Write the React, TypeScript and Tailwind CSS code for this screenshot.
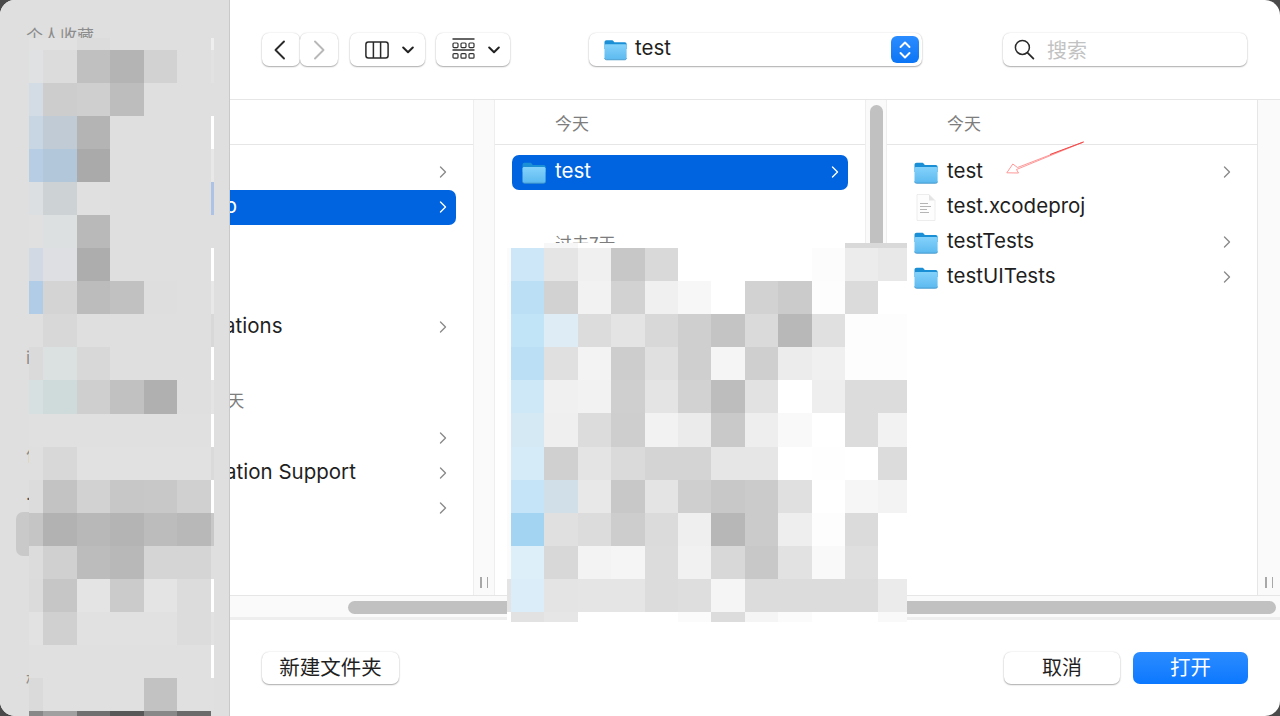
import React from "react";

const sideRows: string[][] = [
  ["#e1e1e1","#e1e1e1","#dcdcdc","#dfdfdf","#dfdfdf","#dfdfdf","#eeeeee"],
  ["#e0e1e3","#dcdcdc","#c0c0c0","#b4b4b4","#d2d2d2","#dfdfdf","#e2e2e2"],
  ["#d3dbe5","#cdcdcd","#cfcfcf","#bdbdbd","#dfdfdf","#dfdfdf","#dfdfdf"],
  ["#c8d5e2","#c1cbd5","#b4b4b4","#dfdfdf","#dfdfdf","#dfdfdf","#ffffff"],
  ["#b6cde3","#b3c7da","#aaaaaa","#dfdfdf","#dfdfdf","#dfdfdf","#e8e8e8"],
  ["#dbdfe2","#cdd2d5","#e0e0e0","#dfdfdf","#dfdfdf","#dfdfdf","#adc3e6"],
  ["#e0e0e0","#dde0e0","#b9b9b9","#dfdfdf","#dfdfdf","#dfdfdf","#dfdfdf"],
  ["#d1d9e4","#dddfe2","#adadad","#dfdfdf","#dfdfdf","#dfdfdf","#ffffff"],
  ["#b0cce6","#d4d4d4","#bcbcbc","#c1c1c1","#dedede","#dfdfdf","#e8e8e8"],
  ["#dfdfdf","#d8d8d8","#dfdfdf","#dfdfdf","#dfdfdf","#dfdfdf","#d8d8d8"],
  ["#dadada","#dbe0e0","#d8d8d8","#dfdfdf","#dfdfdf","#dfdfdf","#ffffff"],
  ["#d7e0e0","#cfdbdb","#cfcfcf","#c1c1c1","#b0b0b0","#dfdfdf","#e4e4e4"],
  ["#e0e0e0","#e0e0e0","#e0e0e0","#e0e0e0","#e0e0e0","#e0e0e0","#ffffff"],
  ["#dfdfdf","#d8d8d8","#e1e1e1","#e1e1e1","#e1e1e1","#e1e1e1","#dadada"],
  ["#dcdcdc","#c3c3c3","#d2d2d2","#c7c7c7","#c8c8c8","#d0d0d0","#ffffff"],
  ["#c5c5c5","#b2b2b2","#b8b8b8","#b4b4b4","#bcbcbc","#b8b8b8","#c8c8c8"],
  ["#dcdcdc","#d0d0d0","#bcbcbc","#b8b8b8","#d5d5d5","#d5d5d5","#dfdfdf"],
  ["#dbdbdb","#c6c6c6","#e4e4e4","#cbcbcb","#e4e4e4","#dcdcdc","#ffffff"],
  ["#e2e2e2","#d0d0d0","#e1e1e1","#e1e1e1","#e1e1e1","#dcdcdc","#e2e2e2"],
  ["#e0e0e0","#e0e0e0","#e0e0e0","#e0e0e0","#e0e0e0","#e0e0e0","#ffffff"],
  ["#dadada","#e0e0e0","#e0e0e0","#e0e0e0","#c2c2c2","#e0e0e0","#e0e0e0"],
  ["#888888","#a0a0a0","#707070","#585858","#888888","#6a6a6a","#dfdfdf"],
];

const midRows: string[][] = [
  ["#ffffff","#ffffff","#f7f7f7","#ffffff","#ffffff","#ffffff","#ffffff","#ffffff","#ffffff","#ffffff","#ffffff","#d9d9d9","#d9d9d9"],
  ["#fbfbfb","#cde7f8","#e5e5e5","#f0f0f0","#c7c7c7","#d9d9d9","#ffffff","#ffffff","#ffffff","#ffffff","#fcfcfc","#ececec","#e8e8e8"],
  ["#fbfbfb","#bbe0f6","#d2d2d2","#f2f2f2","#d2d2d2","#f0f0f0","#f7f7f7","#ffffff","#d2d2d2","#cbcbcb","#fdfdfd","#dbdbdb","#ffffff"],
  ["#fbfbfb","#c2e4f7","#deedf5","#dcdcdc","#e4e4e4","#d8d8d8","#cfcfcf","#c4c4c4","#dadada","#b8b8b8","#e0e0e0","#fdfdfd","#fdfdfd"],
  ["#fbfbfb","#bbe0f5","#e0e0e0","#f3f3f3","#cdcdcd","#e0e0e0","#cfcfcf","#f5f5f5","#cfcfcf","#ececec","#f0f0f0","#fdfdfd","#fdfdfd"],
  ["#fbfbfb","#cfe8f7","#f0f0f0","#f2f2f2","#cfcfcf","#e4e4e4","#d2d2d2","#bdbdbd","#e2e2e2","#ffffff","#eeeeee","#dcdcdc","#dcdcdc"],
  ["#fbfbfb","#d5e9f5","#efefef","#dcdcdc","#cecece","#f2f2f2","#ebebeb","#c9c9c9","#eeeeee","#f9f9f9","#ffffff","#dcdcdc","#f2f2f2"],
  ["#fbfbfb","#d5ebf7","#d0d0d0","#e4e4e4","#dadada","#d4d4d4","#d4d4d4","#e6e6e6","#e6e6e6","#ffffff","#fefefe","#ffffff","#dcdcdc"],
  ["#fbfbfb","#c5e4f7","#d0dfe8","#e8e8e8","#c8c8c8","#e4e4e4","#cfcfcf","#c8c8c8","#cbcbcb","#e0e0e0","#ffffff","#f6f6f6","#f3f3f3"],
  ["#fbfbfb","#a3d5f2","#e0e0e0","#dcdcdc","#cdcdcd","#dbdbdb","#efefef","#b7b7b7","#cbcbcb","#eeeeee","#fdfdfd","#dbdbdb","#ffffff"],
  ["#fbfbfb","#ddeff9","#d8d8d8","#f3f3f3","#f5f5f5","#dcdcdc","#f1f1f1","#d8d8d8","#c8c8c8","#e2e2e2","#f9f9f9","#dfdfdf","#ffffff"],
  ["#e4e4e4","#daedf8","#e4e4e4","#e5e5e5","#e5e5e5","#dcdcdc","#dedede","#f5f5f5","#dcdcdc","#dcdcdc","#dcdcdc","#dcdcdc","#ebebeb"],
  ["#ffffff","#e2e2e2","#e6e6e6","#ffffff","#ffffff","#ffffff","#fbfbfb","#dcdcdc","#f5f5f5","#fbfbfb","#ffffff","#ffffff","#f9f9f9"],
];

function Folder({ w = 24, h = 22 }: { w?: number; h?: number }) {
  return (
    <svg width={w} height={h} viewBox="0 0 24 22" className="shrink-0">
      <defs>
        <linearGradient id="fold" x1="0" y1="0" x2="0" y2="1">
          <stop offset="0" stopColor="#84d2fb" />
          <stop offset="1" stopColor="#5cb9ef" />
        </linearGradient>
      </defs>
      <path d="M0.5 3C0.5 1.6 1.4 0.8 2.6 0.8H8C9 0.8 9.4 1.2 10 1.9L10.8 3H21.6C23 3 23.6 3.8 23.6 5V10H0.5Z" fill="#1b8fd6" />
      <path d="M0.5 6.6C0.5 5.6 1.2 5 2.2 5H21.8C22.8 5 23.6 5.6 23.6 6.6V19.2C23.6 20.4 22.8 21.2 21.6 21.2H2.6C1.4 21.2 0.5 20.4 0.5 19.2Z" fill="url(#fold)" />
      <path d="M0.5 19.6C0.7 20.6 1.5 21.2 2.6 21.2H21.6C22.7 21.2 23.4 20.6 23.6 19.6" fill="none" stroke="#3d94c8" strokeWidth="0.9" />
    </svg>
  );
}

function Chevron({ white }: { white?: boolean }) {
  return (
    <svg width="8" height="12" viewBox="0 0 8 12" className="mb-[1px] shrink-0">
      <path d="M1.5 1L6.5 6L1.5 11" fill="none" stroke={white ? "#ffffff" : "#8a8a8a"} strokeWidth="1.4" strokeLinecap="round" strokeLinejoin="round" />
    </svg>
  );
}

function Down() {
  return (
    <svg width="12" height="8" viewBox="0 0 12 8">
      <path d="M1.2 1.5L6 6.2L10.8 1.5" fill="none" stroke="#222222" strokeWidth="2" strokeLinecap="round" strokeLinejoin="round" />
    </svg>
  );
}

function DocIcon() {
  return (
    <svg width="24" height="27" viewBox="0 0 24 27" className="shrink-0">
      <path d="M3 0.5H15L21 6.5V26.5H3Z" fill="#fdfdfd" stroke="#e8e8e8" strokeWidth="0.8" />
      <path d="M15 0.5V6.5H21Z" fill="#e4e4e4" />
      <path d="M6 9.5H14M6 12.5H17M6 15.5H13M6 18.5H15" stroke="#b5b5b5" strokeWidth="1" />
    </svg>
  );
}

function Grip() {
  return (
    <div className="mt-auto mb-[7px] flex justify-center gap-[5px]">
      <div className="h-[11px] w-[1.5px] bg-[#a8a8a8]" />
      <div className="h-[11px] w-[1.5px] bg-[#a8a8a8]" />
    </div>
  );
}

function Row({ name, sel, chev, doc, cls }: { name: string; sel?: boolean; chev?: boolean; doc?: boolean; cls?: string }) {
  return (
    <div className={`flex h-[35px] items-center rounded-[7px] pl-[10px] pr-[9px] ${sel ? "bg-[#0064e1] text-white" : "text-[#1f1f1f]"} ${cls ?? ""}`}>
      {doc ? <div className="w-[24px] shrink-0"><DocIcon /></div> : <Folder />}
      <span className="ml-[9px] whitespace-nowrap pb-[2px] text-[20.5px] leading-none">{name}</span>
      {chev && <div className="ml-auto flex"><Chevron white={sel} /></div>}
    </div>
  );
}

const btn = "flex items-center justify-center rounded-[7px] bg-white shadow-[0_1px_1.5px_rgba(0,0,0,0.3),0_0_1.5px_rgba(0,0,0,0.18)]";

export default function App() {
  return (
    <div className="relative h-[716px] w-[1280px] overflow-hidden bg-[#4a4a4a] font-['Inter','Noto_Sans_CJK_SC',sans-serif]">
      <div className="flex h-[716px] w-[1280px] overflow-hidden rounded-[15px] bg-white">
        {/* sidebar */}
        <aside className="relative z-10 flex h-full w-[230px] shrink-0 flex-col border-r border-[#c9c9c9] bg-[#dfdfdf] pl-[26px] pt-[26px] text-[17px] leading-[20px] text-[#8c8c8c]">
          <div>个人收藏</div>
          <div className="mt-[302px]">iCloud</div>
          <div className="mt-[77px]">位置</div>
          <div className="mt-[19px] text-[#555]">.</div>
          <div className="mt-[166px]">标签</div>
          <div className="absolute left-[16px] top-[512px] h-[44px] w-[40px] rounded-[7px] bg-[#c9c9c9]" />
          <div className="absolute left-[29px] top-[38px] grid grid-cols-[14px_repeat(5,33.5px)_3.5px] grid-rows-[12px_repeat(20,33.05px)_5px]">
            {sideRows.flat().map((c, i) => (
              <div key={i} style={{ backgroundColor: c }} />
            ))}
          </div>
        </aside>

        {/* main */}
        <main className="flex min-w-0 flex-1 flex-col">
          {/* toolbar */}
          <div className="flex h-[100px] shrink-0 items-start border-b border-[#e6e6e6] pl-[32px] pt-[33px]">
            <div className={`${btn} h-[33px] w-[38px] pr-[2px]`}>
              <svg width="14" height="20" viewBox="0 0 14 20"><path d="M11 1.5L2.5 10L11 18.5" fill="none" stroke="#2a2a2a" strokeWidth="1.9" strokeLinecap="round" strokeLinejoin="round" /></svg>
            </div>
            <div className={`${btn} h-[33px] w-[38px]`}>
              <svg width="14" height="20" viewBox="0 0 14 20"><path d="M3 1.5L11.5 10L3 18.5" fill="none" stroke="#b8b8b8" strokeWidth="1.9" strokeLinecap="round" strokeLinejoin="round" /></svg>
            </div>
            <div className={`${btn} ml-[12px] h-[33px] w-[75px] gap-[13px] pl-[4px]`}>
              <svg width="24" height="18" viewBox="0 0 24 18"><rect x="0.9" y="0.9" width="22.2" height="16.2" rx="2.5" fill="none" stroke="#2a2a2a" strokeWidth="1.5" /><path d="M8.4 1V17M15.6 1V17" stroke="#2a2a2a" strokeWidth="1.5" /></svg>
              <Down />
            </div>
            <div className={`${btn} ml-[11px] h-[33px] w-[74px] gap-[13px] pl-[5px]`}>
              <svg width="23" height="22" viewBox="0 0 23 22" className="-mt-[1px]">
                <path d="M0.5 1H22.5M0.5 12H22.5" stroke="#333333" strokeWidth="1.3" />
                {[1, 9, 17].map((x) => (
                  <g key={x}>
                    <rect x={x} y="5" width="5" height="4.6" rx="1" fill="none" stroke="#333333" strokeWidth="1.2" />
                    <rect x={x} y="15.6" width="5" height="4.6" rx="1" fill="none" stroke="#333333" strokeWidth="1.2" />
                  </g>
                ))}
              </svg>
              <Down />
            </div>
            <div className={`${btn} ml-[79px] h-[33px] w-[333px] justify-start pl-[15px] pr-[3px]`}>
              <Folder w={23} h={22} />
              <span className="ml-[8px] pb-[2px] text-[20.5px] leading-none text-[#1f1f1f]">test</span>
              <div className="ml-auto flex h-[27px] w-[28px] items-center justify-center rounded-[6px] bg-gradient-to-b from-[#2a8cff] to-[#0a75f5]">
                <svg width="14" height="22" viewBox="0 0 14 22"><path d="M2.5 8L7 3.5L11.5 8M2.5 14L7 18.5L11.5 14" fill="none" stroke="#ffffff" strokeWidth="1.9" strokeLinecap="round" strokeLinejoin="round" /></svg>
              </div>
            </div>
            <div className={`${btn} ml-[81px] h-[33px] w-[244px] justify-start pl-[11px]`}>
              <svg width="21" height="21" viewBox="0 0 21 21"><circle cx="8.4" cy="8.4" r="7" fill="none" stroke="#2a2a2a" strokeWidth="1.5" /><path d="M13.4 13.6L19.4 19.6" stroke="#2a2a2a" strokeWidth="1.8" strokeLinecap="round" /></svg>
              <span className="ml-[12px] pt-[2px] text-[20px] leading-none text-[#c2c2c2]">搜索</span>
            </div>
          </div>

          {/* columns */}
          <div className="flex h-[495px] shrink-0">
            <section className="-ml-[130px] flex w-[373px] shrink-0 flex-col">
              <div className="h-[45px] shrink-0 border-b border-[#e6e6e6]" />
              <div className="flex flex-col pl-[16px] pr-[17px] pt-[10px]">
                <Row name="li" chev cls="!pl-[24px]" />
                <Row name="MyApp" sel chev cls="!pl-[20px]" />
                <Row name="Applications" chev cls="mt-[85px] !pl-[14px]" />
                <div className="ml-[56px] mt-[46px] h-[20px] whitespace-nowrap text-[17px] leading-[20px] text-[#7d7d7d]">过去30天</div>
                <Row name="li" chev cls="mt-[10px]" />
                <Row name="Application Support" chev cls="!pl-[15px]" />
                <Row name="li" chev />
              </div>
            </section>
            <div className="flex w-[22px] shrink-0 flex-col border-x border-[#eeeeee] bg-[#fafafa]"><Grip /></div>

            <section className="flex w-[370px] shrink-0 flex-col">
              <div className="flex h-[45px] shrink-0 items-center border-b border-[#e6e6e6] pl-[60px] pt-[5px] text-[17px] text-[#7d7d7d]">今天</div>
              <div className="px-[17px] pt-[10px]">
                <Row name="test" sel chev />
              </div>
              <div className="ml-[60px] mt-[44px] text-[17px] leading-[20px] text-[#7d7d7d]">过去7天</div>
            </section>
            <div className="flex w-[22px] shrink-0 flex-col border-x border-[#eeeeee] bg-[#fafafa] pl-[4px] pt-[5px]">
              <div className="h-[240px] w-[13px] rounded-full bg-[#c1c1c1]" />
            </div>

            <section className="flex w-[370px] shrink-0 flex-col">
              <div className="flex h-[45px] shrink-0 items-center border-b border-[#e6e6e6] pl-[60px] pt-[5px] text-[17px] text-[#7d7d7d]">今天</div>
              <div className="flex flex-col pl-[17px] pr-[17px] pt-[10px]">
                <Row name="test" chev />
                <Row name="test.xcodeproj" doc />
                <Row name="testTests" chev />
                <Row name="testUITests" chev />
              </div>
            </section>
            <div className="flex w-[23px] shrink-0 flex-col border-l border-[#e6e6e6] bg-[#fafafa]"><Grip /></div>
          </div>

          {/* horizontal scroll */}
          <div className="flex h-[25px] shrink-0 flex-col border-t border-[#e6e6e6] bg-[#fafafa]">
            <div className="ml-[118px] mr-[4px] mt-[5px] h-[13px] rounded-full bg-[#c1c1c1]" />
            <div className="mt-auto h-[3px] bg-[#eeeeee]" />
          </div>

          {/* footer */}
          <div className="flex flex-1 items-start pl-[32px] pr-[32px] pt-[32px]">
            <div className={`${btn} h-[32px] w-[137px] text-[20.5px] leading-none text-[#1f1f1f]`}>新建文件夹</div>
            <div className={`${btn} ml-auto h-[32px] w-[116px] text-[20px] leading-none text-[#1f1f1f]`}>取消</div>
            <div className="ml-[13px] flex h-[32px] w-[115px] items-center justify-center rounded-[7px] bg-gradient-to-b from-[#2a8cff] to-[#0a78ff] text-[20.5px] leading-none text-white">打开</div>
          </div>
        </main>
      </div>

      {/* redaction block */}
      <div className="absolute left-[507px] top-[243px] grid grid-cols-[4px_repeat(11,33.4px)_28.6px] grid-rows-[5px_repeat(11,33.1px)_10px] bg-white">
        {midRows.flat().map((c, i) => (
          <div key={i} style={{ backgroundColor: c }} />
        ))}
      </div>

      {/* annotation arrow */}
      <svg className="absolute left-[1000px] top-[135px]" width="90" height="45" viewBox="0 0 90 45">
        <path d="M83.5 7L17.5 32.5L12.8 29L6.8 37.8L18.5 38L16.5 34.5Z" fill="#ffffff" stroke="#ff8c8c" strokeWidth="0.9" />
        <path d="M83.5 7L50 19.5" stroke="#f04a4a" strokeWidth="1" />
      </svg>
    </div>
  );
}
